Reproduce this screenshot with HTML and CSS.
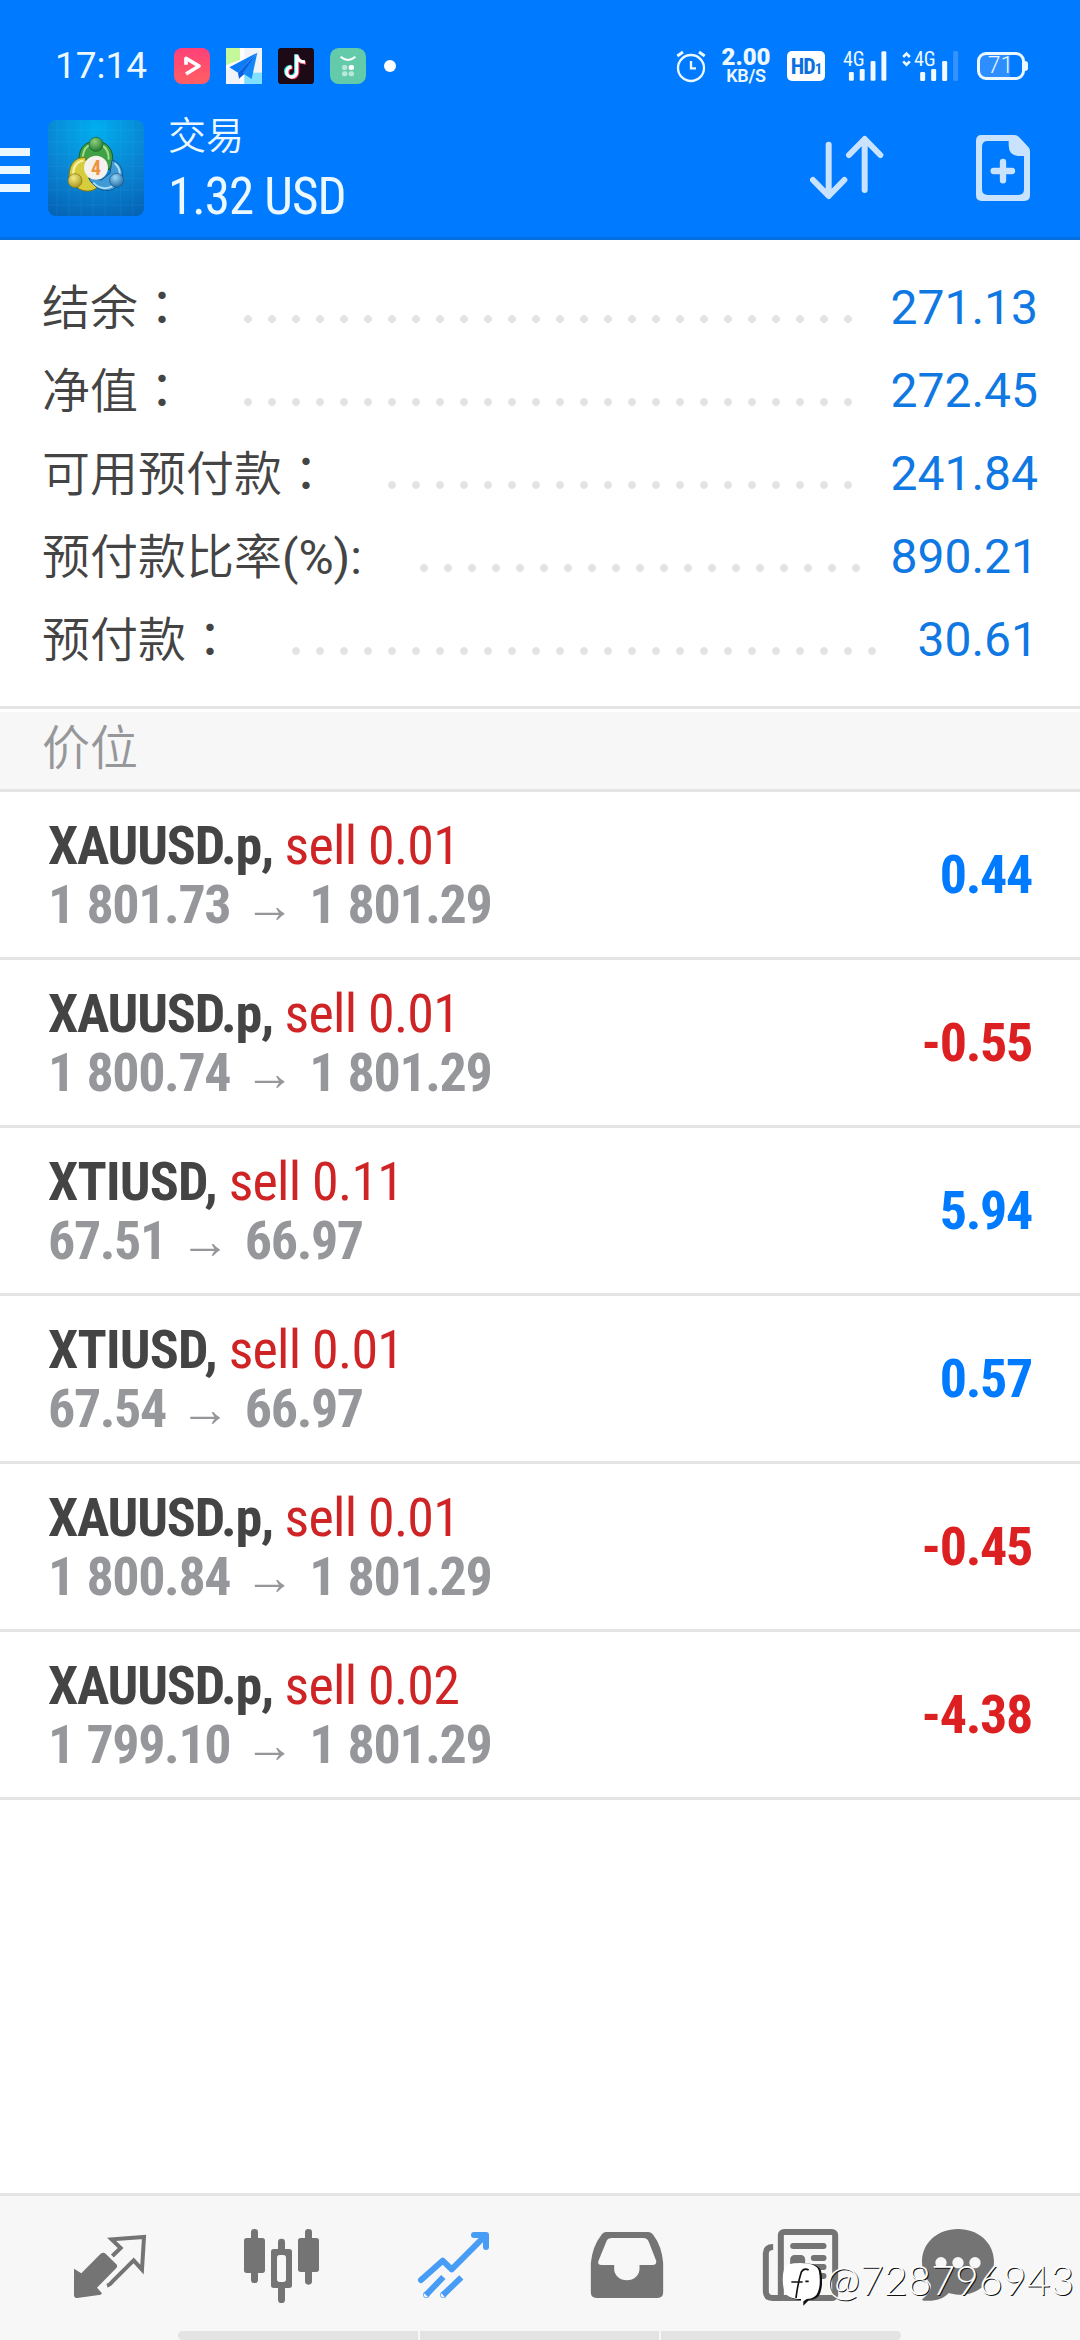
FILE: index.html
```html
<!DOCTYPE html>
<html lang="zh-CN">
<head>
<meta charset="utf-8">
<title>交易</title>
<link rel="stylesheet" href="styles.css">
</head>
<body>
<div class="screen">
  <header class="header">
    <div class="status">
      <span class="clock">17:14</span>
      <div class="notifications">
        <svg class="note" viewBox="0 0 108 108"><defs><linearGradient id="pink" x1="0" y1="0" x2="0" y2="1"><stop offset="0" stop-color="#ff4079"/><stop offset="1" stop-color="#ff5f62"/></linearGradient></defs><rect width="108" height="108" rx="24" fill="url(#pink)"/><path d="M36 50V31L75 54 36 78" fill="none" stroke="#fff" stroke-width="11" stroke-linejoin="round"/></svg>
        <svg class="note" viewBox="0 0 108 108"><path fill="#f0f4f8" d="M0 0h108v108H0z"/><path fill="#c5f79b" d="M0 0h42v36L0 52z"/><path fill="#fff" d="M42 0h13v108H42zM0 52l42-16v14L0 66z"/><path fill="#7fe0ff" d="M55 74h53v34H55z"/><path fill="#0a7cf5" d="M94 14 10 58l26 16z"/><path fill="#0a5ee0" d="M94 14 36 74l3 18 15-13z"/><path fill="#1487f8" d="M94 14 50 76l27 17z"/></svg>
        <svg class="note" viewBox="0 0 108 108"><rect width="108" height="108" rx="10" fill="#1c0a16"/><g fill="none" stroke-width="10"><path stroke="#25e5e0" d="M53 19v52a15 15 0 1 1-15-16M53 20c1 14 12 23 25 23"/><path stroke="#f62d55" d="M59 23v52a15 15 0 1 1-15-16M59 24c1 14 12 21 25 21"/><path stroke="#fff" d="M56 20v53a15 15 0 1 1-15-16M56 20c1 15 12 22 25 22"/></g></svg>
        <svg class="note" viewBox="0 0 108 108"><rect width="108" height="108" rx="26" fill="#63cba9"/><path d="M32 26q22 20 44 0" fill="none" stroke="#fff" stroke-width="6"/><g fill="#b8e8d8"><rect x="36" y="51" width="16" height="15" rx="6"/><rect x="56" y="51" width="16" height="15" rx="6" fill="#fff"/><rect x="36" y="70" width="16" height="15" rx="6"/><rect x="56" y="70" width="16" height="15" rx="6"/></g></svg>
        <span class="more-dot"></span>
      </div>
      <div class="indicators">
        <svg class="alarm" viewBox="105 54 90 108" fill="none" stroke="#ecf8ff" stroke-width="7"><circle cx="150" cy="114" r="39"/><path d="M150 93v22h15"/><path stroke-width="9" d="M109 78l17-12M174 66l17 12"/></svg>
        <div class="speed"><b>2.00</b><span>KB/S</span></div>
        <div class="hd">HD<small>1</small></div>
        <div class="signal"><span class="net">4G</span><svg viewBox="606 54 134 108" fill="#f2faff"><rect x="624" y="126" width="15" height="27" rx="4"/><rect x="657" y="117" width="15" height="36" rx="4"/><rect x="690" y="93" width="15" height="60" rx="4"/><rect x="723" y="63" width="15" height="90" rx="4"/></svg></div>
        <div class="signal second"><span class="net">4G</span><svg viewBox="783 54 170 108" fill="#f2faff"><path d="M786 81l10-10 10 10M786 94l10 10 10-10" fill="none" stroke="#ecf8ff" stroke-width="8"/><rect x="837" y="126" width="15" height="27" rx="4"/><rect x="870" y="117" width="15" height="36" rx="4"/><rect x="903" y="93" width="15" height="60" rx="4"/><rect x="936" y="63" width="15" height="90" rx="4" fill="#3394ff"/></svg></div>
        <div class="battery"><span>71</span></div>
      </div>
    </div>
    <div class="titlebar">
      <div class="menu"><i></i><i></i><i></i></div>
      <svg class="logo" viewBox="24 30 288 288">
        <defs>
          <radialGradient id="sky" cx=".5" cy=".1" r="1"><stop offset="0" stop-color="#00aef0"/><stop offset=".55" stop-color="#0a84d2"/><stop offset="1" stop-color="#0562b4"/></radialGradient>
          <radialGradient id="g" cx=".4" cy=".3" r=".8"><stop offset="0" stop-color="#8fd07c"/><stop offset="1" stop-color="#18702c"/></radialGradient>
          <radialGradient id="y" cx=".4" cy=".3" r=".8"><stop offset="0" stop-color="#f4ec86"/><stop offset="1" stop-color="#a08a12"/></radialGradient>
          <radialGradient id="b" cx=".4" cy=".3" r=".8"><stop offset="0" stop-color="#9ad8f6"/><stop offset="1" stop-color="#155f9e"/></radialGradient>
        </defs>
        <rect x="24" y="30" width="288" height="288" rx="24" fill="url(#sky)"/>
        <path d="M51 30v288M87 30v288M123 30v288M159 30v288M195 30v288M242 30v288M278 30v288M24 60h288M24 96h288M24 134h288M24 170h288M24 206h288M24 240h288M24 285h288" stroke="#5fc8f0" stroke-opacity=".15" stroke-width="2"/>
        <path d="M118 160c-6-46 18-66 50-66s56 24 49 66l-10 20-30-35-40 5z" fill="#3fa044" stroke="#12602a" stroke-width="3"/>
        <path d="M128 140c3-22 14-34 26-36M184 105c16 8 23 24 22 44" fill="none" stroke="#a2dc90" stroke-width="6"/>
        <path d="M136 143c-36-4-52 30-48 66l30 28c22 12 48 6 60-12l-28-28z" fill="#d6cc3c" stroke="#85750c" stroke-width="3"/>
        <path d="M100 196c-2-24 10-42 30-44" fill="none" stroke="#f7f0a0" stroke-width="7"/>
        <path d="M216 150c28 8 36 36 30 66l-26 22c-30 12-62-8-74-34l38 6 26-20z" fill="#3f9ad6" stroke="#125590" stroke-width="3"/>
        <path d="M160 218c16 18 40 22 58 10M224 160c12 10 16 22 15 34" fill="none" stroke="#a9def5" stroke-width="6"/>
        <circle cx="168" cy="103" r="21" fill="url(#g)" stroke="#12602a" stroke-width="2"/>
        <circle cx="105" cy="212" r="21" fill="url(#y)" stroke="#85750c" stroke-width="2"/>
        <circle cx="230" cy="211" r="21" fill="url(#b)" stroke="#125590" stroke-width="2"/>
        <circle cx="168" cy="173" r="36" fill="#f4f1ee"/>
        <text x="168" y="195" text-anchor="middle" class="logo-num">4</text>
      </svg>
      <div class="titles"><div class="title">交易</div><div class="profit">1.32 USD</div></div>
      <svg class="sort" viewBox="505 312 228 204" fill="none" stroke="#c9e3ff" stroke-width="18" stroke-linecap="round" stroke-linejoin="round"><path d="M564 344v153M517 450l47 48 47-48M672 480V328M625 375l47-48 47 48"/></svg>
      <svg class="add" viewBox="1002 312 168 204"><path fill="#c9e3ff" fill-rule="evenodd" d="M1022 315h98q8 0 14 6l28 30q5 5 5 12v133q0 17-17 17h-128q-17 0-17-17V332q0-17 17-17zM1040 333q-17 0-17 17v128q0 17 17 17h92q17 0 17-17V378h-14q-32 0-32-32v-13z"/><path d="M1058 423h55M1086 396v55" stroke="#c9e3ff" stroke-width="19" stroke-linecap="round"/></svg>
    </div>
  </header>

  <section class="summary">
    <div class="line"><span class="label">结余<i lang="zh-TW">：</i></span><span class="leader"></span><span class="value">271.13</span></div>
    <div class="line"><span class="label">净值<i lang="zh-TW">：</i></span><span class="leader"></span><span class="value">272.45</span></div>
    <div class="line"><span class="label">可用预付款<i lang="zh-TW">：</i></span><span class="leader"></span><span class="value">241.84</span></div>
    <div class="line"><span class="label">预付款比率<b>(%):</b></span><span class="leader"></span><span class="value">890.21</span></div>
    <div class="line"><span class="label">预付款<i lang="zh-TW">：</i></span><span class="leader"></span><span class="value">30.61</span></div>
  </section>

  <h2 class="section-title">价位</h2>

  <main class="positions">
    <div class="position"><div><div class="deal"><b>XAUUSD.p,</b> <span>sell 0.01</span></div><div class="prices">1 801.73<i>→</i>1 801.29</div></div><div class="pl up">0.44</div></div>
    <div class="position"><div><div class="deal"><b>XAUUSD.p,</b> <span>sell 0.01</span></div><div class="prices">1 800.74<i>→</i>1 801.29</div></div><div class="pl down">-0.55</div></div>
    <div class="position"><div><div class="deal oil"><b>XTIUSD,</b> <span>sell 0.11</span></div><div class="prices">67.51<i>→</i>66.97</div></div><div class="pl up">5.94</div></div>
    <div class="position"><div><div class="deal oil"><b>XTIUSD,</b> <span>sell 0.01</span></div><div class="prices">67.54<i>→</i>66.97</div></div><div class="pl up">0.57</div></div>
    <div class="position"><div><div class="deal"><b>XAUUSD.p,</b> <span>sell 0.01</span></div><div class="prices">1 800.84<i>→</i>1 801.29</div></div><div class="pl down">-0.45</div></div>
    <div class="position"><div><div class="deal"><b>XAUUSD.p,</b> <span>sell 0.02</span></div><div class="prices">1 799.10<i>→</i>1 801.29</div></div><div class="pl down">-4.38</div></div>
  </main>

  <nav class="tabs">
    <div class="icons">
      <svg viewBox="24 45 252 252" fill="#747474"><path d="M42 176l22 14 58-59q8-6 15 0l32 32q5 5 0 11l-58 59 15 17-4 4-70 10q-10 0-10-10z"/><path d="M157 138l25-24-27-26 97-7-6 98-25-28-64 64q-8 10-16 12" fill="none" stroke="#747474" stroke-width="12"/></svg>
      <svg viewBox="540 45 252 252" fill="#747474"><rect x="573" y="57" width="21" height="162" rx="10"/><rect x="552" y="84" width="63" height="105" rx="8"/><rect x="735" y="57" width="21" height="167" rx="10"/><rect x="714" y="84" width="63" height="102" rx="8"/><rect x="654" y="86" width="21" height="193" rx="10"/><rect x="633" y="117" width="63" height="117" rx="8"/><rect x="651" y="135" width="27" height="81" rx="8" fill="#f7f7f7"/></svg>
      <svg viewBox="1056 45 252 252" fill="none" stroke="#479cf6" stroke-width="18"><path d="M1083 210l65-58 27 26 98-98" stroke-linecap="round" stroke-linejoin="round"/><path d="M1242 75h36v36" stroke-linecap="round" stroke-linejoin="round"/><path d="M1098 255l52-54M1149 255l55-53"/><circle cx="1099" cy="254" r="1" stroke-width="17"/><circle cx="1150" cy="254" r="1" stroke-width="17"/></svg>
      <svg viewBox="13.5 45 252 252"><path fill="#747474" fill-rule="evenodd" d="M76 66h128q8 0 14 8 26 34 30 85v88q0 17-17 17H48q-17 0-17-17v-88q5-51 32-85 5-8 13-8zM94 84q-12 0-16 10l-24 58q-4 13 8 13h39v12a37 33 0 0 0 76 0v-12h39q13 0 11-13l-22-56q-4-12-17-12z"/></svg>
      <svg viewBox="52.5 45 252 252" fill="none" stroke="#747474" stroke-width="18"><rect x="121" y="66" width="163" height="198" rx="10"/><path d="M98 111q-22 0-22 20v113q0 20 20 20h30"/><g stroke-linecap="round"><path d="M158 108h91M220 144h29M220 171h29M220 198h29"/></g><rect x="158" y="144" width="27" height="45" rx="4" fill="#747474"/></svg>
      <svg viewBox="528 45 252 252"><path fill="#747474" d="M654 57c62 0 108 42 108 98 0 60-50 102-106 99-12 0-22-3-30-5-14 17-42 26-74 23-8-1-6-4-2-7 18-14 24-28 22-42-14-18-26-40-26-68 0-56 46-98 108-98z"/><circle cx="603" cy="158" r="17" fill="#f7f7f7"/><circle cx="654" cy="158" r="17" fill="#f7f7f7"/><circle cx="705" cy="158" r="17" fill="#f7f7f7"/></svg>
    </div>
    <div class="handles"><i></i><i></i><i></i></div>
  </nav>

  <div class="watermark">
    <svg viewBox="126 153 120 135"><path d="M135 175q5-18 48-18 54 0 58 26 6 36-3 62-6 20-34 22l-17 17v-17q-48 0-54-28-8-34 2-64z" fill="#111" transform="translate(3 3)"/><path d="M133 175q5-16 48-16 52 0 56 26 6 36-3 60-6 20-34 22l-17 12v-12q-45 0-51-28-8-34 1-64z" fill="#fff"/><path d="M206 180q-14-8-22 6-10 30-16 78M154 216h34M196 214h10" fill="none" stroke="#111" stroke-width="5"/></svg>
    <span>@728796943</span>
  </div>
</div>
</body>
</html>
```
FILE: styles.css
```css
* { box-sizing: border-box; }
body { margin: 0; background: #fff; font-family: Roboto, "Noto Sans CJK SC", sans-serif; }
i { font-style: normal; }
svg { display: block; flex: none; }
.screen { position: relative; display: flex; flex-direction: column; width: 1080px; height: 2340px; overflow: hidden; }

/* Header */
.header { height: 240px; background: #007aff; border-bottom: 3px solid #066fdf; color: #ecf8ff; }
.status { display: flex; align-items: center; height: 132px; padding: 0 52px 0 55px; }
.clock { width: 119px; font-size: 37px; line-height: 44px; }
.notifications { display: flex; align-items: center; gap: 16px; }
.note { width: 36px; height: 36px; }
.more-dot { width: 12px; height: 12px; margin-left: 2px; border-radius: 50%; background: #fff; }
.indicators { display: flex; align-items: center; margin-left: auto; }
.alarm { width: 30px; height: 36px; }
.speed { display: flex; flex-direction: column; align-items: center; width: 50px; margin-left: 15px; font-weight: 700; }
.speed b { font-size: 24px; line-height: 20px; }
.speed span { font-size: 18px; line-height: 18px; letter-spacing: -.3px; font-weight: 600; }
.hd { width: 38px; height: 30px; margin-left: 16px; border-radius: 5px; background: #fff; color: #0a6fe0; font: 700 22px/31px "Roboto Condensed", sans-serif; text-align: center; letter-spacing: -1px; }
.hd small { font-size: 15px; }
.signal { position: relative; margin-left: 18px; }
.signal svg { width: 44px; height: 36px; }
.signal .net { position: absolute; left: 0; top: 1px; font: 400 20px/20px "Roboto Condensed", sans-serif; }
.second { margin-left: 15px; }
.second svg { width: 57px; }
.second .net { left: 12px; }
.battery { display: flex; position: relative; align-items: center; width: 48px; height: 28px; margin: 0 3px 0 18px; border: 3px solid #ecf8ff; border-radius: 9px; background: linear-gradient(90deg, #2d8fff 30px, transparent 30px); }
.battery::after { content: ""; position: absolute; right: -6px; top: 6px; width: 3px; height: 10px; border-radius: 0 3px 3px 0; background: #ecf8ff; }
.battery span { width: 41px; text-align: center; font-size: 23px; font-weight: 300; line-height: 24px; }

.titlebar { display: flex; align-items: flex-start; height: 105px; padding-right: 49px; }
.menu { display: flex; flex-direction: column; gap: 10px; width: 30px; margin: 16px 18px 0 0; }
.menu i { height: 8px; background: #ecf8ff; }
.logo { width: 96px; height: 96px; margin-top: -12px; }
.logo-num { font: 700 60px "Roboto Condensed", sans-serif; fill: #f0913c; }
.titles { margin: -27px 0 0 24px; }
.title { font: 350 38px/56px "Noto Sans CJK SC", sans-serif; }
.profit { margin-top: 6px; font: 400 51px/60px "Roboto Condensed", sans-serif; letter-spacing: -.9px; }
.sort { width: 76px; height: 68px; margin: 2px 0 0 auto; }
.add { width: 56px; height: 68px; margin: 2px 0 0 90px; }

/* Account summary */
.summary { height: 469px; padding: 26px 42px 0; border-bottom: 3px solid #e4e4e4; }
.line { display: flex; height: 83px; align-items: flex-start; }
.label { margin-top: -3px; font: 350 48px/83px "Noto Sans CJK SC", sans-serif; color: #444; }
.label i { font-family: "Noto Sans CJK TC", sans-serif; font-weight: 400; }
.label b { font: 400 48px Roboto, sans-serif; }
.leader { flex: 1; height: 8px; margin: 49px 26px 0 50px; background: radial-gradient(circle, #e3e3e3 3.5px, transparent 4.2px) 0 0 / 24px 8px repeat-x; }
.value { color: #0f78e2; font-size: 48px; line-height: 83px; }
.section-title { height: 80px; margin: 3px 0 0; padding-left: 42px; border-bottom: 3px solid #e4e4e4; background: #f7f7f7; color: #96979b; font: 350 48px/64px "Noto Sans CJK SC", sans-serif; }

/* Open positions */
.position { display: flex; justify-content: space-between; align-items: flex-start; height: 168px; padding: 24px 48px 0 48px; border-bottom: 3px solid #e4e4e4; font: 54px/59px "Roboto Condensed", sans-serif; }
.deal { height: 59px; color: #ce2426; letter-spacing: -.75px; white-space: nowrap; }
.deal b { color: #444; letter-spacing: -1.2px; }
.oil b { letter-spacing: -.8px; }
.prices { height: 59px; color: #96979b; font-weight: 700; letter-spacing: -1.4px; word-spacing: 1.5px; white-space: nowrap; }
.prices i { display: inline-block; width: 79px; text-align: center; vertical-align: 1px; font: 700 50px/40px "Liberation Serif", serif; letter-spacing: 0; }
.pl { margin-top: 29px; font-weight: 700; letter-spacing: -1.3px; }
.up { color: #007aff; }
.down { color: #dc1f21; }

/* Bottom tabs */
.tabs { display: flex; flex-direction: column; height: 147px; margin-top: auto; border-top: 3px solid #e4e4e4; background: #f7f7f7; }
.icons { display: grid; grid-template-columns: 172px 172px 172px 173px 173px 144px; justify-items: center; padding: 29px 0 0 24px; }
.icons svg { width: 84px; height: 84px; }
.handles { display: flex; gap: 2px; width: 723px; height: 9px; margin: auto 0 0 178px; border-radius: 5px; overflow: hidden; }
.handles i { flex: 1; background: #e3e3e3; }

.watermark { position: absolute; left: 782px; top: 2261px; display: flex; gap: 4px; color: #fff; font: 300 41px/37px Lato, sans-serif; text-shadow: 1px 1px 0 #111; }
.watermark svg { width: 40px; height: 45px; }
```
